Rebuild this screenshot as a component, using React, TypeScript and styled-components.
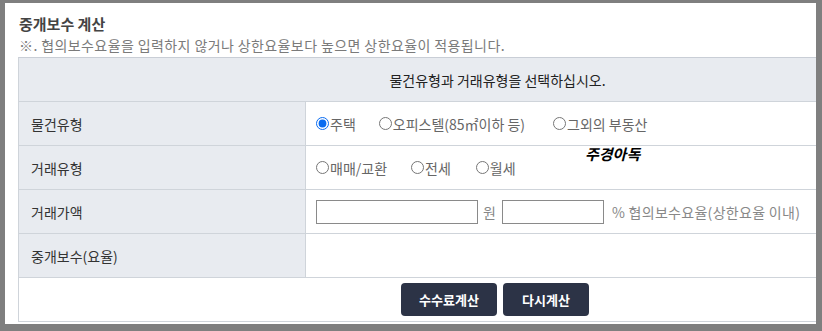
import React from "react";
import styled, { createGlobalStyle } from "styled-components";

const Global = createGlobalStyle`
  html, body { margin: 0; padding: 0; background: #fff; }
  body { font-family: "Noto Sans CJK KR", "Noto Sans", sans-serif; }
  * { box-sizing: border-box; }
`;

const Frame = styled.div`
  position: relative;
  width: 822px;
  height: 331px;
  overflow: hidden;
  border-style: solid;
  border-color: #7f7f7f;
  border-width: 3px 6px 7px 5px;
  background: #fff;
  padding: 11px 0 0 13px;
`;

const Title = styled.h3`
  margin: 0 0 0 1px;
  font-size: 15px;
  line-height: 20px;
  font-weight: 700;
  color: #444;
`;

const Note = styled.p`
  margin: 1px 0 2px 1px;
  font-size: 14px;
  line-height: 20px;
  letter-spacing: 0.4px;
  color: #7a7a7a;
`;

const Table = styled.div`
  display: grid;
  width: 958px;
  grid-template-columns: 287px 1fr;
  border-top: 1px solid #c9ced6;
  border-left: 1px solid #cfd4da;
  font-size: 14px;
`;

const HeaderCell = styled.div`
  grid-column: 1 / span 2;
  height: 44px;
  display: flex;
  align-items: center;
  justify-content: center;
  background: #e8ebf0;
  color: #222;
  border-bottom: 1px solid #cfd4da;
`;

const Label = styled.div`
  height: 44px;
  display: flex;
  align-items: center;
  padding-left: 12px;
  background: #e8ebf0;
  color: #333;
  border-bottom: 1px solid #cfd4da;
  border-right: 1px solid #cfd4da;
`;

const Value = styled.div`
  height: 44px;
  display: flex;
  align-items: center;
  padding-left: 10px;
  color: #666;
  border-bottom: 1px solid #cfd4da;
`;

const ButtonCell = styled.div`
  grid-column: 1 / span 2;
  height: 44px;
  display: flex;
  align-items: center;
  justify-content: center;
  gap: 6px;
  padding-right: 5px;
  border-bottom: 1px solid #cfd4da;
`;

const RadioLabel = styled.label<{ $gap?: number }>`
  display: inline-flex;
  align-items: center;
  margin-right: ${(p) => p.$gap ?? 22}px;
  white-space: nowrap;
`;

const Radio = styled.input`
  width: 13px;
  height: 13px;
  margin: 0 1px 0 0;
  accent-color: #0a6cf0;
`;

const TextInput = styled.input<{ $w: number }>`
  width: ${(p) => p.$w}px;
  height: 24px;
  border: 1px solid #8a8a8a;
  margin: 0;
  padding: 2px 4px;
  font: inherit;
`;

const Unit = styled.span<{ $l?: number; $r?: number }>`
  margin: 0 ${(p) => p.$r ?? 6}px 0 ${(p) => p.$l ?? 5}px;
  color: #888;
`;

const Hint = styled(Unit)`
  letter-spacing: 0.3px;
`;

const Button = styled.button<{ $w: number }>`
  width: ${(p) => p.$w}px;
  height: 33px;
  border: none;
  border-radius: 4px;
  background: #2c3346;
  color: #fff;
  font-family: inherit;
  font-size: 13px;
  font-weight: 700;
  cursor: pointer;
`;

const Watermark = styled.span`
  position: absolute;
  left: 580px;
  top: 140px;
  font-size: 15px;
  font-weight: 700;
  font-style: italic;
  color: #000;
`;

export default function App() {
  return (
    <>
      <Global />
      <Frame>
        <Title>중개보수 계산</Title>
        <Note>※. 협의보수요율을 입력하지 않거나 상한요율보다 높으면 상한요율이 적용됩니다.</Note>
        <Table>
          <HeaderCell>물건유형과 거래유형을 선택하십시오.</HeaderCell>

          <Label>물건유형</Label>
          <Value>
            <RadioLabel $gap={23}>
              <Radio type="radio" name="kind" defaultChecked />주택
            </RadioLabel>
            <RadioLabel $gap={28}>
              <Radio type="radio" name="kind" />오피스텔(85㎡이하 등)
            </RadioLabel>
            <RadioLabel>
              <Radio type="radio" name="kind" />그외의 부동산
            </RadioLabel>
          </Value>

          <Label>거래유형</Label>
          <Value>
            <RadioLabel $gap={24}>
              <Radio type="radio" name="deal" />매매/교환
            </RadioLabel>
            <RadioLabel $gap={25}>
              <Radio type="radio" name="deal" />전세
            </RadioLabel>
            <RadioLabel>
              <Radio type="radio" name="deal" />월세
            </RadioLabel>
          </Value>

          <Label>거래가액</Label>
          <Value>
            <TextInput $w={162} />
            <Unit>원</Unit>
            <TextInput $w={102} />
            <Hint $l={8} $r={0}>% 협의보수요율(상한요율 이내)</Hint>
          </Value>

          <Label>중개보수(요율)</Label>
          <Value />

          <ButtonCell>
            <Button $w={96}>수수료계산</Button>
            <Button $w={86}>다시계산</Button>
          </ButtonCell>
        </Table>
        <Watermark>주경아독</Watermark>
      </Frame>
    </>
  );
}
